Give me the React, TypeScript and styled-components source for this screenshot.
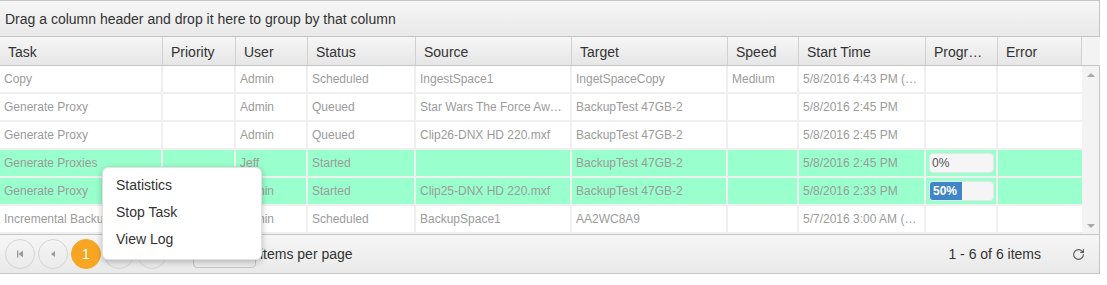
import styled, { createGlobalStyle } from "styled-components";
import { RotateCw } from "lucide-react";

const GlobalStyle = createGlobalStyle`
  html, body {
    margin: 0;
    padding: 0;
    background: #ffffff;
    font-family: "Liberation Sans", Arial, sans-serif;
  }
`;

const COLS = "163px 73px 72px 108px 156px 156px 71px 127px 72px 84px";

const Page = styled.div`
  position: relative;
  width: 1107px;
  height: 285px;
`;

const Grid = styled.div`
  width: 1099px;
  border: 1px solid #c5c5c5;
  border-left: none;
  background: #fff;
`;

const GroupBar = styled.div`
  height: 35px;
  display: flex;
  align-items: center;
  padding-left: 5px;
  font-size: 14px;
  color: #333;
  background: linear-gradient(#f6f6f6, #e9e9e9);
  border-bottom: 1px solid #c5c5c5;
`;

const HeaderRow = styled.div`
  display: grid;
  grid-template-columns: ${COLS} 17px;
  height: 28px;
  background: linear-gradient(#f6f6f6, #e6e6e6);
  border-bottom: 1px solid #c5c5c5;
`;

const HeaderCell = styled.div`
  box-sizing: border-box;
  padding: 0 10px 0 8px;
  line-height: 30px;
  font-size: 14px;
  color: #333;
  border-right: 1px solid #d0d0d0;
  white-space: nowrap;
  overflow: hidden;
  text-overflow: ellipsis;

  &:last-child {
    border-right: none;
    background: #f3f3f3;
  }
`;

const Body = styled.div`
  display: flex;
  height: 168px;
`;

const Rows = styled.div`
  width: 1082px;
`;

const Row = styled.div<{ $active?: boolean }>`
  display: grid;
  grid-template-columns: ${COLS};
  height: 28px;
  background: ${({ $active }) => ($active ? "#99ffcc" : "#ffffff")};
`;

const Cell = styled.div`
  box-sizing: border-box;
  padding: 0 4px;
  line-height: 27px;
  font-size: 12px;
  color: #9b9b9b;
  border-right: 2px solid #efefef;
  border-bottom: 2px solid #efefef;
  white-space: nowrap;
  overflow: hidden;
  text-overflow: ellipsis;

  &:last-child {
    border-right: none;
  }
`;

const ProgressCell = styled(Cell)`
  padding: 3px 3px 0;
  line-height: normal;
`;

const Scrollbar = styled.div`
  width: 17px;
  background: #f3f3f3;
  display: flex;
  flex-direction: column;
  justify-content: space-between;
  align-items: center;
  padding: 7px 0 6px;
  box-sizing: border-box;
`;

const Arrow = styled.div<{ $down?: boolean }>`
  width: 0;
  height: 0;
  border-left: 4px solid transparent;
  border-right: 4px solid transparent;
  ${({ $down }) =>
    $down ? "border-top: 4px solid #a8a8a8;" : "border-bottom: 4px solid #a8a8a8;"}
`;

const ProgressTrack = styled.div`
  width: 65px;
  height: 20px;
  border-radius: 4px;
  background: #f5f5f5;
  border: 1px solid #e6e6e6;
  box-sizing: border-box;
  overflow: hidden;
  display: flex;
  align-items: center;
`;

const ProgressFill = styled.div`
  height: 100%;
  background: #3f85c8;
  display: flex;
  align-items: center;
  padding-left: 3px;
  box-sizing: border-box;
  color: #fff;
  font-weight: bold;
  font-size: 12px;
`;

const ProgressText = styled.span`
  padding-left: 2px;
  color: #555;
  font-size: 12px;
`;

const Pager = styled.div`
  height: 38px;
  display: flex;
  align-items: center;
  padding: 0 14px 0 5px;
  gap: 3px;
  background: linear-gradient(#f6f6f6, #e9e9e9);
  border-top: 1px solid #c5c5c5;
`;

const PageButton = styled.div<{ $active?: boolean }>`
  width: 30px;
  height: 30px;
  box-sizing: border-box;
  border-radius: 50%;
  border: 1px solid ${({ $active }) => ($active ? "#f6a623" : "#d4d4d4")};
  background: ${({ $active }) => ($active ? "#f6a623" : "transparent")};
  color: ${({ $active }) => ($active ? "#fff" : "#999")};
  font-size: 14px;
  display: flex;
  align-items: center;
  justify-content: center;
`;

const SizeSelect = styled.div`
  width: 63px;
  height: 26px;
  box-sizing: border-box;
  margin-left: 23px;
  margin-top: 2px;
  border: 1px solid #c5c5c5;
  border-radius: 4px;
  background: linear-gradient(#fafafa, #ececec);
`;

const PagerLabel = styled.span`
  font-size: 14px;
  color: #333;
  margin-left: 1px;
`;

const PagerInfo = styled.span`
  margin-left: auto;
  font-size: 14px;
  color: #333;
  margin-right: 28px;
`;

const Refresh = styled.div`
  display: flex;
  color: #555;
`;

const Menu = styled.div`
  position: absolute;
  left: 102px;
  top: 167px;
  width: 160px;
  box-sizing: border-box;
  padding: 3px 0 7px;
  background: #fff;
  border-radius: 6px;
  border: 1px solid #e2e2e2;
  box-shadow: 0 2px 6px rgba(0, 0, 0, 0.25);
`;

const MenuItem = styled.div`
  height: 27px;
  display: flex;
  align-items: center;
  padding-left: 13px;
  font-size: 14px;
  color: #333;
`;

type Task = {
  task: string;
  priority: string;
  user: string;
  status: string;
  source: string;
  target: string;
  speed: string;
  start: string;
  progress?: number;
  active?: boolean;
};

const tasks: Task[] = [
  { task: "Copy", priority: "", user: "Admin", status: "Scheduled", source: "IngestSpace1", target: "IngetSpaceCopy", speed: "Medium", start: "5/8/2016 4:43 PM (UTC)" },
  { task: "Generate Proxy", priority: "", user: "Admin", status: "Queued", source: "Star Wars The Force Awakens.mxf", target: "BackupTest 47GB-2", speed: "", start: "5/8/2016 2:45 PM" },
  { task: "Generate Proxy", priority: "", user: "Admin", status: "Queued", source: "Clip26-DNX HD 220.mxf", target: "BackupTest 47GB-2", speed: "", start: "5/8/2016 2:45 PM" },
  { task: "Generate Proxies", priority: "", user: "Jeff", status: "Started", source: "", target: "BackupTest 47GB-2", speed: "", start: "5/8/2016 2:45 PM", progress: 0, active: true },
  { task: "Generate Proxy", priority: "", user: "Admin", status: "Started", source: "Clip25-DNX HD 220.mxf", target: "BackupTest 47GB-2", speed: "", start: "5/8/2016 2:33 PM", progress: 50, active: true },
  { task: "Incremental Backup", priority: "", user: "Admin", status: "Scheduled", source: "BackupSpace1", target: "AA2WC8A9", speed: "", start: "5/7/2016 3:00 AM (UTC)" },
];

const headers = ["Task", "Priority", "User", "Status", "Source", "Target", "Speed", "Start Time", "Progress", "Error"];

function Progress({ value }: { value: number }) {
  return (
    <ProgressTrack>
      {value > 0 ? (
        <ProgressFill style={{ width: `${value}%` }}>{value}%</ProgressFill>
      ) : (
        <ProgressText>{value}%</ProgressText>
      )}
    </ProgressTrack>
  );
}

function SeekFirst() {
  return (
    <svg width="8" height="8" viewBox="0 0 8 8">
      <rect x="1" y="0.5" width="1.3" height="7" fill="#999" />
      <polygon points="7,0.5 7,7.5 2.5,4" fill="#999" />
    </svg>
  );
}

function Prev() {
  return (
    <svg width="8" height="8" viewBox="0 0 8 8">
      <polygon points="6,1 6,7 2,4" fill="#999" />
    </svg>
  );
}

export default function App() {
  return (
    <Page>
      <GlobalStyle />
      <Grid>
        <GroupBar>Drag a column header and drop it here to group by that column</GroupBar>
        <HeaderRow>
          {headers.map((h) => (
            <HeaderCell key={h}>{h}</HeaderCell>
          ))}
          <HeaderCell />
        </HeaderRow>
        <Body>
          <Rows>
            {tasks.map((t, i) => (
              <Row key={i} $active={t.active}>
                <Cell>{t.task}</Cell>
                <Cell>{t.priority}</Cell>
                <Cell>{t.user}</Cell>
                <Cell>{t.status}</Cell>
                <Cell>{t.source}</Cell>
                <Cell>{t.target}</Cell>
                <Cell>{t.speed}</Cell>
                <Cell>{t.start}</Cell>
                {t.progress !== undefined ? (
                  <ProgressCell>
                    <Progress value={t.progress} />
                  </ProgressCell>
                ) : (
                  <Cell />
                )}
                <Cell />
              </Row>
            ))}
          </Rows>
          <Scrollbar>
            <Arrow />
            <Arrow $down />
          </Scrollbar>
        </Body>
        <Pager>
          <PageButton>
            <SeekFirst />
          </PageButton>
          <PageButton>
            <Prev />
          </PageButton>
          <PageButton $active>1</PageButton>
          <PageButton />
          <PageButton />
          <SizeSelect />
          <PagerLabel>items per page</PagerLabel>
          <PagerInfo>1 - 6 of 6 items</PagerInfo>
          <Refresh>
            <RotateCw size={13} strokeWidth={2} />
          </Refresh>
        </Pager>
      </Grid>
      <Menu>
        <MenuItem>Statistics</MenuItem>
        <MenuItem>Stop Task</MenuItem>
        <MenuItem>View Log</MenuItem>
      </Menu>
    </Page>
  );
}
